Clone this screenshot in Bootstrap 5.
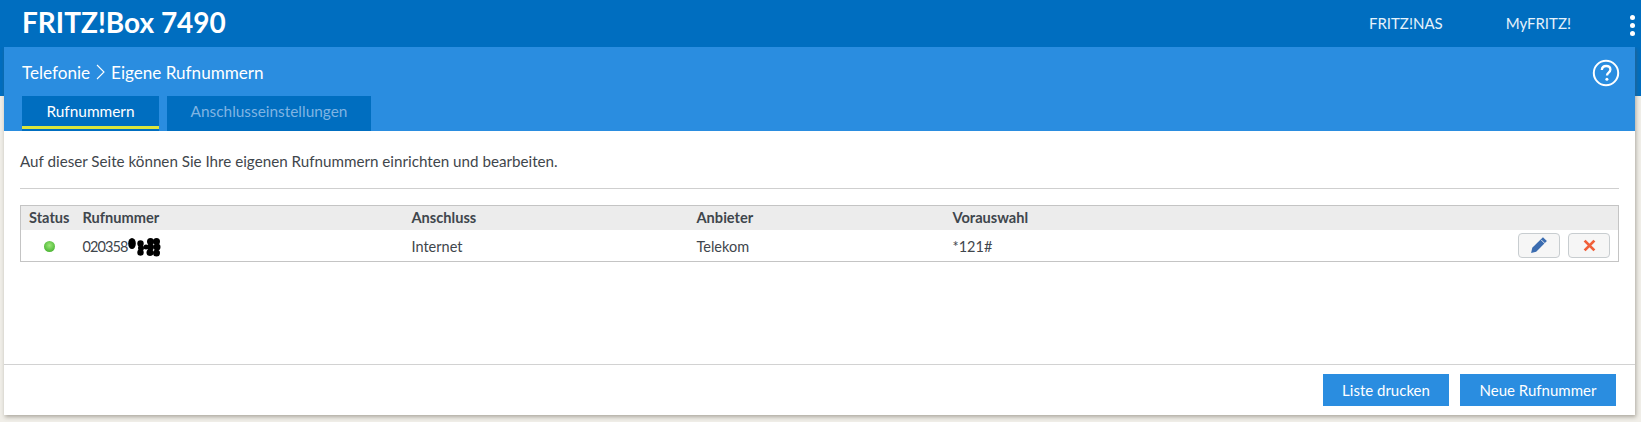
<!DOCTYPE html>
<html lang="de">
<head>
  <meta charset="UTF-8" />
  <meta name="viewport" content="width=device-width, initial-scale=1" />
  <title>FRITZ!Box 7490</title>
  <link href="https://cdn.jsdelivr.net/npm/bootstrap@5.3.3/dist/css/bootstrap.min.css" rel="stylesheet" />
  <style>
    html, body { height: 422px; overflow: hidden; }
    body {
      font-family: "Lato", "Liberation Sans", sans-serif;
      font-size: 14px;
      color: #3f464c;
      background: linear-gradient(#006ec0 96px, #f0eee8 96px);
    }
    .topbar { height: 47px; padding: 0 0 0 22px; background: #006ec0; }
    .box-title { font-size: 28px; font-weight: 700; color: #fff; line-height: 1; margin-top: -3px; }
    .top-link { font-size: 15px; color: #e6f2fb; text-decoration: none; }
    .top-links { gap: 63px; margin-right: 70px; }
    .dots { gap: 3px; right: 6px; top: 15px; }
    .dots span { width: 5px; height: 5px; border-radius: 50%; background: #fff; display: block; }
    .sheet { margin: 0 6px 0 4px; height: 368px; background: #fff; box-shadow: 1px 2px 4px rgba(90, 85, 70, .45); }
    .sheet-head { height: 84px; background: #2a8de0; padding: 0 10px 0 18px; }
    .crumbs { height: 49px; color: #fff; font-size: 17.1px; padding-top: 2px; }
    .crumbs svg { margin: 0 5px; }
    .tab-btn {
      height: 35px; line-height: 31px; font-size: 15.4px; text-align: center;
      background: #006ec0; color: #7fb4e3; text-decoration: none;
    }
    .tab-one { width: 137px; color: #fff; box-shadow: inset 0 -2px 0 #006ec0, inset 0 -5px 0 #dbe63c; }
    .tab-two { width: 204px; }
    .tab-row { gap: 8px; }
    .sheet-body { height: 233px; padding: 0 16px; }
    .intro { margin: 0; height: 57px; padding-top: 19px; font-size: 15.2px; color: #3f464c; }
    .rule { height: 1px; background: #cfcfcf; }
    .num-table { margin: 16px 0 0; border: 1px solid #c4c4c4; width: 1599px; table-layout: fixed; }
    .num-table th { background: #ececec; font-weight: 700; height: 24px; padding: 0 0 0 8px; font-size: 14.6px; color: #3f464c; border: 0; vertical-align: middle; }
    .num-table td { height: 32px; padding: 3px 0 0 8px; color: #3f464c; border: 0; vertical-align: middle; font-size: 14.5px; }
    .num-table td.action-td { padding-top: 0; }
    .num-text { letter-spacing: -.9px; }
    .led { width: 11px; height: 11px; border-radius: 50%; margin-left: 15px; background: radial-gradient(circle at 50% 40%, #9ce878, #52b93a 70%); }
    .icon-btn {
      width: 42px; height: 25px; padding: 0; background: #f6f6f6; border: 1px solid #c8cdd0; border-radius: 4px;
    }
    .action-cell { gap: 8px; padding-right: 8px; }
    .sheet-foot { height: 51px; border-top: 1px solid #d2d2d2; padding: 9px 19px 0 0; gap: 11px; }
    .foot-btn { height: 32px; padding: 0; border-radius: 0; background: #2a8de0; color: #fff; font-size: 15px; border: 0; }
    .foot-one { width: 126px; }
    .foot-two { width: 156px; }
  </style>
</head>
<body>
  <div class="topbar d-flex align-items-center justify-content-between position-relative">
    <div class="box-title">FRITZ!Box 7490</div>
    <div class="d-flex top-links">
      <a href="#" class="top-link">FRITZ!NAS</a>
      <a href="#" class="top-link">MyFRITZ!</a>
    </div>
    <div class="dots d-flex flex-column position-absolute"><span></span><span></span><span></span></div>
  </div>

  <div class="sheet">
    <div class="sheet-head">
      <div class="crumbs d-flex align-items-center justify-content-between">
        <div class="d-flex align-items-center">Telefonie<svg width="11" height="18" viewBox="0 0 11 18"><path d="M2 2l7 7-7 7" fill="none" stroke="#fff" stroke-width="1.1"/></svg>Eigene Rufnummern</div>
        <svg width="28" height="28" viewBox="0 0 28 28">
          <circle cx="14" cy="14" r="12.2" fill="none" stroke="#fff" stroke-width="2"/>
          <path d="M9.8 11c.2-2.600 2-4 4.400-4 2.500 0 4.200 1.500 4.200 3.600 0 3-3.400 3-3.400 5.800" fill="none" stroke="#fff" stroke-width="2.300"/>
          <circle cx="14.900" cy="20.300" r="1.500" fill="#fff"/>
        </svg>
      </div>
      <div class="d-flex tab-row">
        <a href="#" class="tab-btn tab-one">Rufnummern</a>
        <a href="#" class="tab-btn tab-two">Anschlusseinstellungen</a>
      </div>
    </div>

    <div class="sheet-body">
      <p class="intro">Auf dieser Seite können Sie Ihre eigenen Rufnummern einrichten und bearbeiten.</p>
      <div class="rule"></div>
      <table class="table num-table">
        <colgroup>
          <col style="width: 54px" /><col style="width: 329px" /><col style="width: 285px" /><col style="width: 256px" /><col style="width: 360px" /><col />
        </colgroup>
        <thead>
          <tr><th>Status</th><th>Rufnummer</th><th>Anschluss</th><th>Anbieter</th><th>Vorauswahl</th><th></th></tr>
        </thead>
        <tbody>
          <tr>
            <td><div class="led"></div></td>
            <td>
              <span class="d-inline-flex align-items-center"><span class="num-text">020358</span><svg width="33" height="20" viewBox="0 0 33 20">
                <g fill="#000">
                  <ellipse cx="4" cy="6.500" rx="3.800" ry="5.500"/>
                  <circle cx="12.500" cy="6.500" r="3.200"/><circle cx="13" cy="11" r="3"/><circle cx="12.500" cy="15.500" r="3.200"/>
                  <circle cx="18" cy="10" r="2.500"/>
                  <circle cx="22.500" cy="4.500" r="3.500"/><circle cx="22.500" cy="10" r="3.500"/><circle cx="22" cy="15.500" r="3.500"/>
                  <circle cx="28.500" cy="4.500" r="3.500"/><circle cx="29" cy="10" r="3.500"/><circle cx="28.500" cy="16" r="3.500"/>
                </g>
              </svg></span>
            </td>
            <td>Internet</td>
            <td>Telekom</td>
            <td>*121#</td>
            <td class="action-td">
              <div class="d-flex justify-content-end action-cell">
                <button class="btn icon-btn d-flex align-items-center justify-content-center" aria-label="Bearbeiten">
                  <svg width="18" height="18" viewBox="0 0 16 16"><path d="M11.500 1l3.500 3.500-9.500 9.500L1 15l1-4.500z" fill="#3b6cb0"/><path d="M10 3.500l3.500 3.500" stroke="#f6f6f6" stroke-width=".8"/></svg>
                </button>
                <button class="btn icon-btn d-flex align-items-center justify-content-center" aria-label="Löschen">
                  <svg width="13" height="13" viewBox="0 0 12 12"><path d="M1.500 1.500l9 9M10.500 1.500l-9 9" stroke="#f0603a" stroke-width="2.600"/></svg>
                </button>
              </div>
            </td>
          </tr>
        </tbody>
      </table>
    </div>

    <div class="sheet-foot d-flex justify-content-end">
      <button class="btn foot-btn foot-one">Liste drucken</button>
      <button class="btn foot-btn foot-two">Neue Rufnummer</button>
    </div>
  </div>
  <script src="https://cdn.jsdelivr.net/npm/bootstrap@5.3.3/dist/js/bootstrap.bundle.min.js"></script>
</body>
</html>
